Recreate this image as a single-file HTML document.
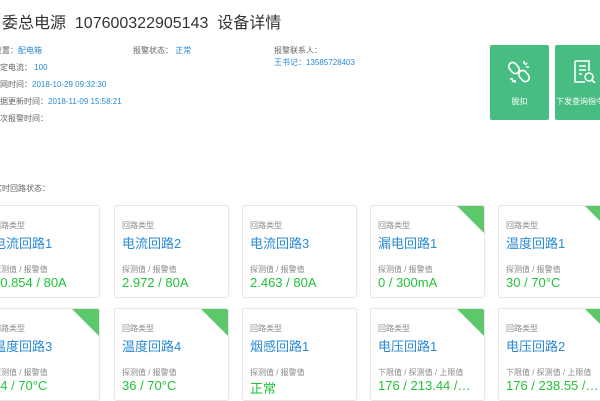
<!DOCTYPE html>
<html><head><meta charset="utf-8"><style>
*{margin:0;padding:0;box-sizing:border-box}
body{width:600px;height:400px;overflow:hidden;background:#fff;position:relative;font-family:"Liberation Sans","Noto Sans CJK SC",sans-serif}
.a{position:absolute;white-space:nowrap}
.t{font-size:16px;color:#333;top:9px;left:2px}
.l{font-size:8px;color:#666}
.b{color:#2a8ad3}
.btn{position:absolute;top:45px;width:59px;height:75px;background:#47bd84;border-radius:2px}
.btn span{position:absolute;top:51px;left:0;width:100%;text-align:center;font-size:8px;color:#fff;white-space:nowrap}
.c{position:absolute;width:115px;height:93px;border:1px solid #e6e6e6;border-radius:3px;background:#fff;overflow:hidden;box-shadow:0 0 2px rgba(0,0,0,.05)}
.c .k{position:absolute;left:7px;top:14px;font-size:8px;color:#888}
.c .n{position:absolute;left:7px;top:27px;font-size:13px;color:#2a8ad3;white-space:nowrap}
.c .m{position:absolute;left:7px;top:58px;font-size:8px;color:#888;white-space:nowrap}
.c .v{position:absolute;left:7px;top:69px;font-size:13px;color:#22c33a;white-space:nowrap}
.c .r{position:absolute;right:0;top:0;width:0;height:0;border-top:27px solid #5cc86a;border-left:27px solid transparent}
</style></head><body>
<div class="a t">委总电源&nbsp; 107600322905143&nbsp; 设备详情</div>
<div class="a l" style="left:-6px;top:45px">位置：<span class="b">配电箱</span></div>
<div class="a l" style="left:-8px;top:62px">额定电流：&nbsp;<span class="b">100</span></div>
<div class="a l" style="left:-8px;top:79px">入网时间：<span class="b">2018-10-29 09:32:30</span></div>
<div class="a l" style="left:-8px;top:96px">数据更新时间：<span class="b">2018-11-09 15:58:21</span></div>
<div class="a l" style="left:-8px;top:113px">首次报警时间：</div>
<div class="a l" style="left:133px;top:45px">报警状态：&nbsp;<span class="b">正常</span></div>
<div class="a l" style="left:274px;top:45px">报警联系人：</div>
<div class="a l b" style="left:274px;top:57px">王书记：13585728403</div>
<div class="a l" style="left:-6px;top:183px">实时回路状态：</div>
<div class="btn" style="left:490px">
<svg style="position:absolute;left:17px;top:14px" width="25" height="26" viewBox="0 0 25 26" fill="none" stroke="#fff" stroke-width="1.6"><rect x="3" y="3" width="8" height="12" rx="4" transform="rotate(-40 7 9)"/><rect x="13" y="11" width="8" height="12" rx="4" transform="rotate(-40 17 17)"/><path d="M17 2v3M20 4l-2 2M22 8h-3M3 20h3M5 23l2-2M8 24v-3"/></svg>
<span>脱扣</span></div>
<div class="btn" style="left:555px;width:50px">
<svg style="position:absolute;left:17px;top:14px" width="25" height="26" viewBox="0 0 25 26" fill="none" stroke="#fff" stroke-width="1.6"><path d="M3 2h14v10M3 2v21h10"/><path d="M7 7h7M7 11h7M7 15h3"/><circle cx="17" cy="18" r="4"/><path d="M20 21l3 3"/></svg>
<span>下发查询指令</span></div>

<div class="c" style="left:-15px;top:205px"><div class="k">回路类型</div><div class="n">电流回路1</div><div class="m">探测值 / 报警值</div><div class="v">10.854 / 80A</div></div>
<div class="c" style="left:114px;top:205px"><div class="k">回路类型</div><div class="n">电流回路2</div><div class="m">探测值 / 报警值</div><div class="v">2.972 / 80A</div></div>
<div class="c" style="left:242px;top:205px"><div class="k">回路类型</div><div class="n">电流回路3</div><div class="m">探测值 / 报警值</div><div class="v">2.463 / 80A</div></div>
<div class="c" style="left:370px;top:205px"><div class="r"></div><div class="k">回路类型</div><div class="n">漏电回路1</div><div class="m">探测值 / 报警值</div><div class="v">0 / 300mA</div></div>
<div class="c" style="left:498px;top:205px"><div class="r"></div><div class="k">回路类型</div><div class="n">温度回路1</div><div class="m">探测值 / 报警值</div><div class="v">30 / 70°C</div></div>

<div class="c" style="left:-15px;top:308px"><div class="r"></div><div class="k">回路类型</div><div class="n">温度回路3</div><div class="m">探测值 / 报警值</div><div class="v">34 / 70°C</div></div>
<div class="c" style="left:114px;top:308px"><div class="r"></div><div class="k">回路类型</div><div class="n">温度回路4</div><div class="m">探测值 / 报警值</div><div class="v">36 / 70°C</div></div>
<div class="c" style="left:242px;top:308px"><div class="k">回路类型</div><div class="n">烟感回路1</div><div class="m">探测值 / 报警值</div><div class="v">正常</div></div>
<div class="c" style="left:370px;top:308px"><div class="r"></div><div class="k">回路类型</div><div class="n">电压回路1</div><div class="m">下限值 / 探测值 / 上限值</div><div class="v">176 / 213.44 /…</div></div>
<div class="c" style="left:498px;top:308px"><div class="r"></div><div class="k">回路类型</div><div class="n">电压回路2</div><div class="m">下限值 / 探测值 / 上限值</div><div class="v">176 / 238.55 /…</div></div>
</body></html>
